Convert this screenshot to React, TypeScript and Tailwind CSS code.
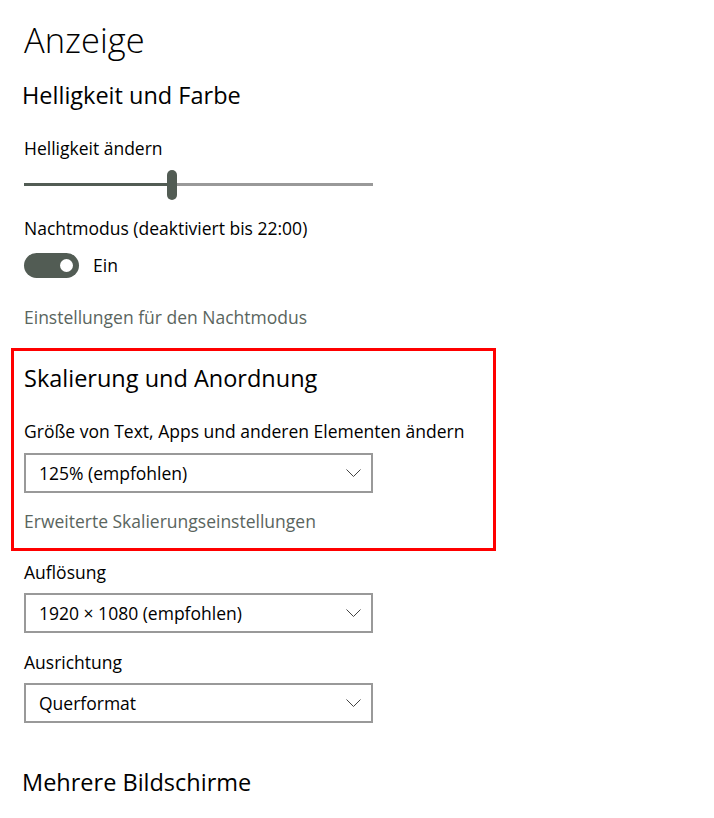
import React from 'react';

const font = { fontFamily: '"Open Sans", "Noto Sans", sans-serif' };

function Chevron() {
  return (
    <svg width="15" height="8" viewBox="0 0 15 8" className="shrink-0">
      <path d="M0.5 0.5 L7.5 7.5 L14.5 0.5" fill="none" stroke="#444" strokeWidth="1" />
    </svg>
  );
}

function Dropdown({ value }: { value: string }) {
  return (
    <div className="flex h-[40px] w-[349px] items-center justify-between border-2 border-[#999999] bg-white pl-[13px] pr-[10px]">
      <span className="text-[17.5px] leading-[24px] text-black">{value}</span>
      <Chevron />
    </div>
  );
}

function Label({ children, className = '' }: { children: React.ReactNode; className?: string }) {
  return <div className={`h-[24px] text-[17.5px] leading-[24px] text-black ${className}`}>{children}</div>;
}

function Heading({ children, className = '' }: { children: React.ReactNode; className?: string }) {
  return <div className={`h-[30px] text-[23.5px] leading-[30px] text-black ${className}`}>{children}</div>;
}

function Link({ children, className = '' }: { children: React.ReactNode; className?: string }) {
  return <div className={`h-[24px] text-[17.5px] leading-[24px] text-[#5a655e] ${className}`}>{children}</div>;
}

export default function App() {
  return (
    <div className="min-h-[818px] w-[714px] bg-white pt-[20px]" style={font}>
      <div className="pl-[24px]">
        <div className="h-[40px] text-[34.5px] font-light leading-[40px] text-black">Anzeige</div>
        <Heading className="mt-[20px] -ml-[2px]">Helligkeit und Farbe</Heading>
        <Label className="mt-[26px]">Helligkeit ändern</Label>

        {/* Brightness slider */}
        <div className="relative mt-[4px] h-[40px] w-[349px]">
          <div className="absolute left-0 top-[19px] flex h-[3px] w-full">
            <div className="h-full w-[145px] bg-[#525c54]" />
            <div className="h-full flex-1 bg-[#999999]" />
          </div>
          <div className="absolute left-[143px] top-[6px] h-[30px] w-[10px] rounded-full bg-[#525c54]" />
        </div>

        <Label className="mt-[12px]">Nachtmodus (deaktiviert bis 22:00)</Label>
        <div className="mt-[13px] flex h-[25px] items-center gap-[14px]">
          <div className="flex h-[25px] w-[55px] items-center justify-end rounded-full bg-[#525c54] pr-[6px]">
            <div className="h-[13px] w-[13px] rounded-full bg-white" />
          </div>
          <span className="text-[17.5px] leading-[25px] text-black">Ein</span>
        </div>
        <Link className="mt-[27px]">Einstellungen für den Nachtmodus</Link>
      </div>

      {/* Highlighted section */}
      <div className="ml-[11px] mt-[19px] h-[203px] w-[485px] border-[3px] border-[#ff0000] pl-[10px] pt-[12px]">
        <Heading>Skalierung und Anordnung</Heading>
        <Label className="mt-[26px]">Größe von Text, Apps und anderen Elementen ändern</Label>
        <div className="mt-[10px]">
          <Dropdown value="125% (empfohlen)" />
        </div>
        <Link className="mt-[16px]">Erweiterte Skalierungseinstellungen</Link>
      </div>

      <div className="pl-[24px]">
        <Label className="mt-[9px]">Auflösung</Label>
        <div className="mt-[9px]">
          <Dropdown value="1920 × 1080 (empfohlen)" />
        </div>
        <Label className="mt-[17px]">Ausrichtung</Label>
        <div className="mt-[9px]">
          <Dropdown value="Querformat" />
        </div>
        <Heading className="mt-[44px] -ml-[2px]">Mehrere Bildschirme</Heading>
      </div>
    </div>
  );
}
